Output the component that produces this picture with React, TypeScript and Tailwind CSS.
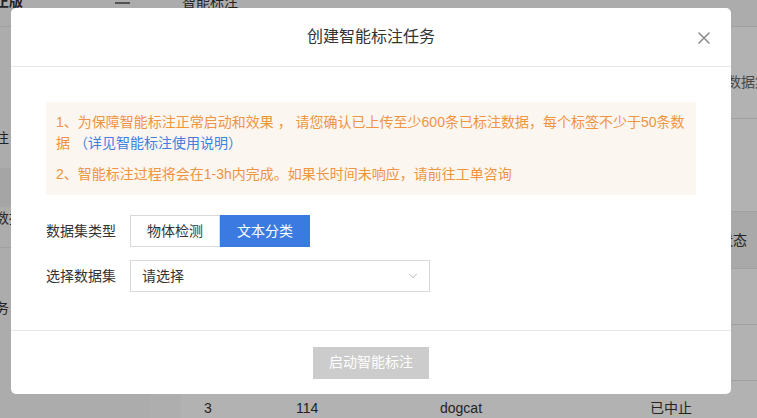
import { ChevronDown } from 'lucide-react';

const ROWS = [
  ['1', '116', 'textcls', '已完成'],
  ['2', '115', 'detect', '已完成'],
  ['3', '114', 'dogcat', '已中止'],
];

function Background() {
  return (
    <div className="flex h-full -ml-[71px]">
      <aside className="flex w-[221px] shrink-0 flex-col bg-[#f7f7f7]">
        <div className="flex h-[27px] shrink-0 items-start justify-between border-b border-[#e5e5e5] pl-[24px] pr-[20px]">
          <span className="-mt-[9px] text-[14px] font-bold text-[#333]">企业级正版</span>
          <span className="mt-[2px] block h-[2px] w-[15px] bg-[#777]" />
        </div>
        <div className="h-[91px] shrink-0" />
        <div className="flex h-[40px] shrink-0 items-center pl-[24px] text-[14px] text-[#333]">智能标注</div>
        <div className="h-[10px] shrink-0" />
        <div className="flex h-[39px] shrink-0 items-center bg-[#ececec] pl-[24px] text-[14px] text-[#333]">数据集</div>
        <div className="flex h-[22px] shrink-0 items-center pl-[24px] text-[14px] text-[#333]">已标注数据集</div>
        <div className="h-[19px] shrink-0 border-b border-[#e5e5e5]" />
        <div className="h-[40px] shrink-0" />
        <div className="flex h-[40px] shrink-0 items-center pl-[24px] text-[14px] text-[#333]">标注任务</div>
      </aside>

      <main className="flex flex-1 flex-col bg-[#fafafa]">
        <div className="flex h-[27px] shrink-0 items-start border-b border-[#e5e5e5] bg-[#f6f6f6] pl-[32px]">
          <span className="-mt-[8px] text-[14px] text-[#333]">智能标注</span>
        </div>
        <div className="ml-[31px] flex flex-1 flex-col overflow-hidden bg-white">
          <div className="flex h-[92px] shrink-0 items-center border-b border-[#e5e5e5] pl-[518px] pt-[20px]">
            <span className="whitespace-nowrap text-[14px] text-[#666]">创建数据集</span>
          </div>
          <div className="h-[93px] shrink-0 border-b border-[#e5e5e5]" />
          <div className="flex h-[57px] shrink-0 items-center whitespace-nowrap border-b border-[#e5e5e5] bg-[#f2f2f2] text-[14px] text-[#333]">
            <span className="w-[115px] pl-[25px]">序号</span>
            <span className="w-[144px]">数据集ID</span>
            <span className="w-[210px]">数据集名称</span>
            <span className="w-[69px]">类型</span>
            <span>状态</span>
          </div>
          {ROWS.map((r) => (
            <div key={r[0]} className="flex h-[56px] shrink-0 items-center whitespace-nowrap border-b border-[#e5e5e5] text-[14px] text-[#333]">
              <span className="w-[115px] pl-[23px]">{r[0]}</span>
              <span className="w-[144px]">{r[1]}</span>
              <span className="w-[210px]">{r[2]}</span>
              <span>{r[3]}</span>
            </div>
          ))}
        </div>
      </main>
    </div>
  );
}

export default function App() {
  return (
    <div className="relative h-[418px] w-[757px] overflow-hidden bg-white font-['Liberation_Sans','Noto_Sans_CJK_SC',sans-serif]">
      <Background />
      <div className="absolute inset-0 bg-black/30" />

      <div className="absolute left-[11px] top-[8px] flex h-[386px] w-[720px] flex-col rounded-[5px] bg-white">
        <div className="relative flex h-[59px] shrink-0 items-center justify-center border-b border-[#e8e8e8]">
          <span className="text-[16px] text-[#333]">创建智能标注任务</span>
          <button className="absolute right-[21px] top-[24px] text-[#8c8c8c]">
            <svg width="12" height="12" viewBox="0 0 12 12" fill="none" stroke="currentColor" strokeWidth="1.6" strokeLinecap="round">
              <path d="M1 1L11 11M11 1L1 11" />
            </svg>
          </button>
        </div>

        <div className="flex flex-1 flex-col px-[35px] pt-[35px]">
          <div className="flex flex-col gap-[10px] bg-[#fcf6f1] py-[10px] pl-[10px] pr-[6px] text-[14px] leading-[21px] text-[#f0943f]">
            <p>
              1、为保障智能标注正常启动和效果 ， 请您确认已上传至少600条已标注数据，每个标签不少于50条数
              <br />
              据 <span className="text-[#3c80e2]">（详见智能标注使用说明）</span>
            </p>
            <p>2、智能标注过程将会在1-3h内完成。如果长时间未响应，请前往工单咨询</p>
          </div>

          <div className="mt-[20px] flex items-center">
            <span className="w-[84px] text-[14px] text-[#333]">数据集类型</span>
            <div className="flex">
              <button className="h-[32px] w-[90px] border border-[#d9d9d9] text-[14px] text-[#333]">物体检测</button>
              <button className="h-[32px] w-[90px] bg-[#3b7be1] text-[14px] text-white">文本分类</button>
            </div>
          </div>

          <div className="mt-[13px] flex items-center">
            <span className="w-[84px] text-[14px] text-[#333]">选择数据集</span>
            <div className="flex h-[32px] w-[300px] items-center justify-between border border-[#d9d9d9] pl-[11px] pr-[9px]">
              <span className="text-[14px] text-[#333]">请选择</span>
              <ChevronDown size={14} strokeWidth={1.3} className="text-[#aaa]" />
            </div>
          </div>
        </div>

        <div className="flex h-[64px] shrink-0 items-center justify-center border-t border-[#e8e8e8]">
          <button className="h-[32px] w-[116px] bg-[#cccccc] text-[14px] text-white">启动智能标注</button>
        </div>
      </div>
    </div>
  );
}
